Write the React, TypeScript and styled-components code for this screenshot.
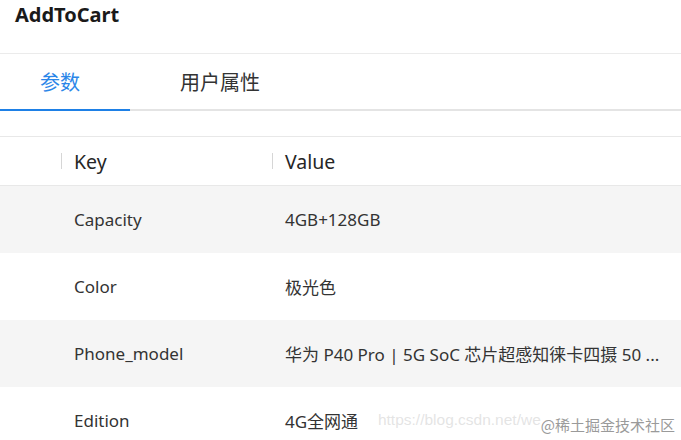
import React, { FC, useState } from "react";
import styled, { createGlobalStyle } from "styled-components";

const GlobalStyle = createGlobalStyle`
    html, body {
        margin: 0;
        padding: 0;
        background: #ffffff;
    }
    body {
        font-family: "Noto Sans", "Noto Sans CJK SC", sans-serif;
        color: #333333;
    }
`;

const Page = styled.div`
    width: 681px;
    height: 440px;
    position: relative;
    overflow: hidden;
    background-color: #ffffff;
`;

const Header = styled.div`
    height: 54px;
    border-bottom: 1px solid #ebebeb;
    padding: 2px 15px 0;
    box-sizing: border-box;
`;

const Title = styled.h1`
    margin: 0;
    font-size: 20px;
    line-height: 26px;
    font-weight: 700;
    color: #1a1a1a;
`;

const TabBar = styled.div`
    display: flex;
    height: 57px;
    border-bottom: 2px solid #e4e4e4;
    box-sizing: border-box;
`;

const Tab = styled.div<{ $active?: boolean }>`
    display: flex;
    align-items: center;
    padding: 0 50px;
    margin-bottom: -2px;
    font-size: 20px;
    color: ${(p) => (p.$active ? "#2b86e8" : "#333333")};
    border-bottom: 2px solid ${(p) => (p.$active ? "#1e80e6" : "transparent")};
    cursor: pointer;
    &:first-child {
        padding-left: 40px;
        padding-right: 50px;
    }
`;

const TableWrap = styled.div`
    margin-top: 25px;
    border-top: 1px solid #e8e8e8;
`;

const Row = styled.div<{ $striped?: boolean; $head?: boolean }>`
    display: grid;
    grid-template-columns: 61px 211px 1fr;
    align-items: center;
    height: ${(p) => (p.$head ? "48px" : "67px")};
    background-color: ${(p) => (p.$striped ? "#f5f5f5" : "#ffffff")};
    border-bottom: ${(p) => (p.$head ? "1px solid #e8e8e8" : "none")};
`;

const HeadCell = styled.div<{ $divider?: boolean }>`
    position: relative;
    padding-left: 13px;
    font-size: 19.5px;
    color: #262626;
    &::before {
        content: "";
        display: ${(p) => (p.$divider ? "block" : "none")};
        position: absolute;
        left: 0;
        top: 50%;
        width: 1px;
        height: 16px;
        margin-top: -8px;
        background-color: #d6d6d6;
    }
`;

const Cell = styled.div`
    padding-left: 13px;
    padding-right: 8px;
    font-size: 17px;
    color: #333333;
    white-space: nowrap;
    overflow: hidden;
    text-overflow: ellipsis;
`;

const Watermark = styled.div`
    position: absolute;
    right: 6px;
    bottom: 5px;
    display: flex;
    align-items: flex-end;
    pointer-events: none;
`;

const WatermarkUrl = styled.span`
    font-family: "Liberation Sans", sans-serif;
    font-size: 15.5px;
    color: rgba(205, 205, 205, 0.55);
    margin-bottom: 6px;
`;

const WatermarkTag = styled.span`
    font-family: "Noto Sans CJK SC", sans-serif;
    font-size: 15px;
    color: #9a9a9a;
`;

const rows = [
    { key: "Capacity", value: "4GB+128GB" },
    { key: "Color", value: "极光色" },
    { key: "Phone_model", value: "华为 P40 Pro | 5G SoC 芯片超感知徕卡四摄 50 ..." },
    { key: "Edition", value: "4G全网通" },
];

const App: FC = () => {
    const [tab, setTab] = useState(0);

    return (
        <Page>
            <GlobalStyle />
            <Header>
                <Title>AddToCart</Title>
            </Header>
            <TabBar>
                {["参数", "用户属性"].map((name, i) => (
                    <Tab key={name} $active={tab === i} onClick={() => setTab(i)}>
                        {name}
                    </Tab>
                ))}
            </TabBar>
            <TableWrap>
                <Row $head>
                    <HeadCell />
                    <HeadCell $divider>Key</HeadCell>
                    <HeadCell $divider>Value</HeadCell>
                </Row>
                {rows.map((r, i) => (
                    <Row key={r.key} $striped={i % 2 === 0}>
                        <Cell />
                        <Cell>{r.key}</Cell>
                        <Cell>{r.value}</Cell>
                    </Row>
                ))}
            </TableWrap>
            <Watermark>
                <WatermarkUrl>https://blog.csdn.net/we</WatermarkUrl>
                <WatermarkTag>@稀土掘金技术社区</WatermarkTag>
            </Watermark>
        </Page>
    );
};

export default App;
